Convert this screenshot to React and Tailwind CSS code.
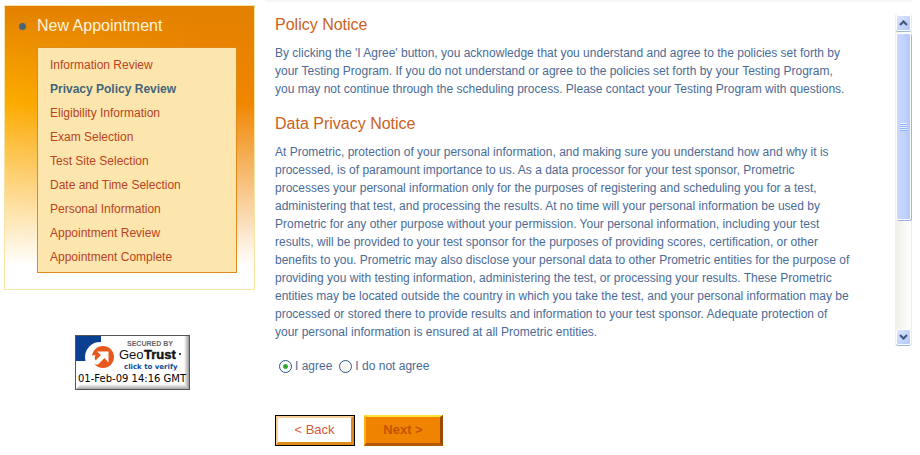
import { useState } from 'react';

const steps = [
    'Information Review',
    'Privacy Policy Review',
    'Eligibility Information',
    'Exam Selection',
    'Test Site Selection',
    'Date and Time Selection',
    'Personal Information',
    'Appointment Review',
    'Appointment Complete',
];

const policyLines = [
    "By clicking the 'I Agree' button, you acknowledge that you understand and agree to the policies set forth by",
    'your Testing Program. If you do not understand or agree to the policies set forth by your Testing Program,',
    'you may not continue through the scheduling process. Please contact your Testing Program with questions.',
];

const privacyLines = [
    'At Prometric, protection of your personal information, and making sure you understand how and why it is',
    'processed, is of paramount importance to us. As a data processor for your test sponsor, Prometric',
    'processes your personal information only for the purposes of registering and scheduling you for a test,',
    'administering that test, and processing the results. At no time will your personal information be used by',
    'Prometric for any other purpose without your permission. Your personal information, including your test',
    'results, will be provided to your test sponsor for the purposes of providing scores, certification, or other',
    'benefits to you. Prometric may also disclose your personal data to other Prometric entities for the purpose of',
    'providing you with testing information, administering the test, or processing your results. These Prometric',
    'entities may be located outside the country in which you take the test, and your personal information may be',
    'processed or stored there to provide results and information to your test sponsor. Adequate protection of',
    'your personal information is ensured at all Prometric entities.',
];

const Lines = ({ lines }) => (
    <p className="text-[12px] leading-[18px] text-[#4b6b97] whitespace-nowrap">
        {lines.map((line) => (
            <span key={line} className="block">{line} </span>
        ))}
    </p>
);

const Sidebar = () => (
    <nav className="border border-[#f7e3a3] bg-[linear-gradient(to_bottom,#e38000_0%,#e3800000_34%),linear-gradient(to_bottom,#ffffff00_34%,#ffffff_92%),linear-gradient(to_right,#fdac00_0%,#f69a00_45%,#f08600_80%)] pt-2 pb-4 pl-8 pr-[17px]">
        <div className="flex items-center h-6 mb-[9px] -ml-[18px]">
            <span className="w-[7px] h-[7px] rounded-full bg-[#44657a] mr-[11px]"></span>
            <h2 className="text-[16px] leading-6 text-[#fff3dc]">New Appointment</h2>
        </div>
        <ul className="border border-[#e08a1a] bg-[#fde6ae] px-3 pt-[5px] pb-[3px]">
            {steps.map((step) => (
                <li key={step} className="text-[12px] leading-6">
                    {step === 'Privacy Policy Review' ? (
                        <a href="#step" aria-current="step" className="font-bold text-[#44657a]">{step}</a>
                    ) : (
                        <a href="#step" className="text-[#b8431f]">{step}</a>
                    )}
                </li>
            ))}
        </ul>
    </nav>
);

const GeoTrustSeal = () => (
    <a href="#verify" aria-label="Secured by GeoTrust, click to verify" className="block w-[115px]">
        <svg viewBox="0 0 115 55" className="block w-full">
            <defs>
                <linearGradient id="bevelRight" x1="0" x2="1" y1="0" y2="0">
                    <stop offset="0" stopColor="#ffffff" />
                    <stop offset="1" stopColor="#999999" />
                </linearGradient>
                <linearGradient id="bevelBottom" x1="0" x2="0" y1="0" y2="1">
                    <stop offset="0" stopColor="#ffffff" />
                    <stop offset="1" stopColor="#a6a6a6" />
                </linearGradient>
            </defs>
            <rect x="0" y="0" width="115" height="55" fill="#ffffff" />
            <rect x="109" y="1" width="5" height="53" fill="url(#bevelRight)" />
            <path d="M1 54 L6 49 H109 L114 54 Z" fill="url(#bevelBottom)" />
            <path d="M1 1 H26 V26 H1 Z" fill="#0b3f8f" />
            <circle cx="25" cy="22" r="15" fill="#ffffff" />
            <circle cx="28" cy="22" r="11" fill="#e8581c" />
            <path d="M16 23 C17 28 20 30 23 29.500 L29.500 23 L33.500 27.500 L33.500 16.500 L22 16.500 L26 20 L20.500 25.500 C19.500 24 19.500 22 20.500 20 C17.500 20 16 21 16 23 Z" fill="#ffffff" />
            <text x="52" y="11" fontSize="7" fontWeight="bold" fill="#666666" fontFamily="Liberation Sans, sans-serif">SECURED BY</text>
            <text x="44" y="24" fontSize="13" fill="#111111" fontFamily="Liberation Sans, sans-serif">Geo</text>
            <text x="69" y="24" fontSize="13" fontWeight="bold" fill="#111111" stroke="#111111" strokeWidth="0.4" fontFamily="Liberation Sans, sans-serif">Trust</text>
            <circle cx="105" cy="19" r="1" fill="#111111" />
            <text x="49" y="34" fontSize="7" fontWeight="bold" fill="#0b4a96" fontFamily="DejaVu Sans, sans-serif">click to verify</text>
            <text x="3" y="47" fontSize="10" fill="#000000" fontFamily="DejaVu Sans, sans-serif">01-Feb-09 14:16 GMT</text>
            <rect x="0.5" y="0.5" width="114" height="54" fill="none" stroke="#555555" />
        </svg>
    </a>
);

const ScrollArrow = ({ label, path }) => (
    <button type="button" aria-label={label} className="flex items-center justify-center w-[15px] h-[16px] shrink-0 rounded-xs border border-white bg-linear-to-br from-[#dbe5fe] to-[#b3c9f8] shadow-[0_1px_0_#9db4dc]">
        <svg viewBox="0 0 9 6" className="w-[9px] h-[6px]">
            <path d={path} fill="none" stroke="#44597f" strokeWidth="2.2" />
        </svg>
    </button>
);

const Scrollbar = () => (
    <div className="flex flex-col items-center w-[17px] shrink-0 bg-linear-to-r from-[#f0efe8] to-[#fefefc] border-x border-[#eeede5]">
        <ScrollArrow label="Scroll up" path="M1 5 L4.500 1.500 L8 5" />
        <div className="flex flex-col items-center justify-center w-[15px] h-[187px] mt-[2px] rounded-xs border border-white bg-linear-to-r from-[#c9d7fc] via-[#c3d3fd] to-[#b2c8f8] shadow-[1px_1px_0_#9db4dc]">
            {[1, 2, 3, 4].map((ridge) => (
                <span key={ridge} className="w-[7px] h-[2px] border-t border-[#eef4fe] bg-[#8cb0f8]"></span>
            ))}
        </div>
        <div className="grow"></div>
        <ScrollArrow label="Scroll down" path="M1 1 L4.500 4.500 L8 1" />
    </div>
);

const Choice = ({ value, label, selected, onSelect }) => (
    <label className="flex items-center gap-[3px] text-[12px] leading-4 text-[#4b6b97]">
        <input
            type="radio"
            name="agreement"
            value={value}
            checked={selected === value}
            onChange={() => onSelect(value)}
            className="appearance-none w-[13px] h-[13px] rounded-full border border-[#2f5681] bg-[radial-gradient(circle,#f4f3ee,#ffffff)] checked:bg-[radial-gradient(circle,#21a121_0px,#3cb43c_2px,#ffffff_3px)]"
        />
        {label}
    </label>
);

const App = () => {
    const [choice, setChoice] = useState('agree');

    return (
        <div className="flex gap-5 bg-white pl-1 pr-2 font-['Liberation_Sans',Arial,sans-serif]">
            <aside className="w-[251px] shrink-0 pt-[5px]">
                <Sidebar />
                <div className="flex justify-center mt-[45px] pl-[6px]">
                    <GeoTrustSeal />
                </div>
            </aside>
            <main className="grow min-w-0">
                <div className="h-[2px] -ml-[10px] bg-[#f6f6f6]"></div>
                <div className="flex justify-between mt-[13px]">
                    <section className="min-w-0 pb-1">
                        <h1 className="text-[16px] leading-[20px] text-[#cb6220] mb-[9px]">Policy Notice</h1>
                        <Lines lines={policyLines} />
                        <h1 className="text-[16px] leading-[20px] text-[#cb6220] mt-4 mb-[9px]">Data Privacy Notice</h1>
                        <Lines lines={privacyLines} />
                    </section>
                    <Scrollbar />
                </div>
                <div className="flex gap-[7px] mt-[13px] pl-1">
                    <Choice value="agree" label="I agree" selected={choice} onSelect={setChoice} />
                    <Choice value="disagree" label="I do not agree" selected={choice} onSelect={setChoice} />
                </div>
                <div className="flex gap-[9px] mt-[41px] pb-2">
                    <button type="button" className="border border-black">
                        <span className="block w-[78px] h-[29px] border-2 border-t-[#fbcf9a] border-l-[#fbcf9a] border-r-[#e08a1a] border-b-[#e08a1a] border-r-3 border-b-3 bg-white text-[13px] leading-6 text-[#cf5a3c]">&lt; Back</span>
                    </button>
                    <button type="button" className="w-[79px] h-[31px] border-2 border-t-[#fde23c] border-l-[#fbb014] border-r-[#9c4a08] border-b-[#b35a06] border-r-3 border-b-3 bg-[#f08400] text-[13px] leading-6 font-bold text-[#c25400]">Next &gt;</button>
                </div>
            </main>
        </div>
    );
};

export default App;
